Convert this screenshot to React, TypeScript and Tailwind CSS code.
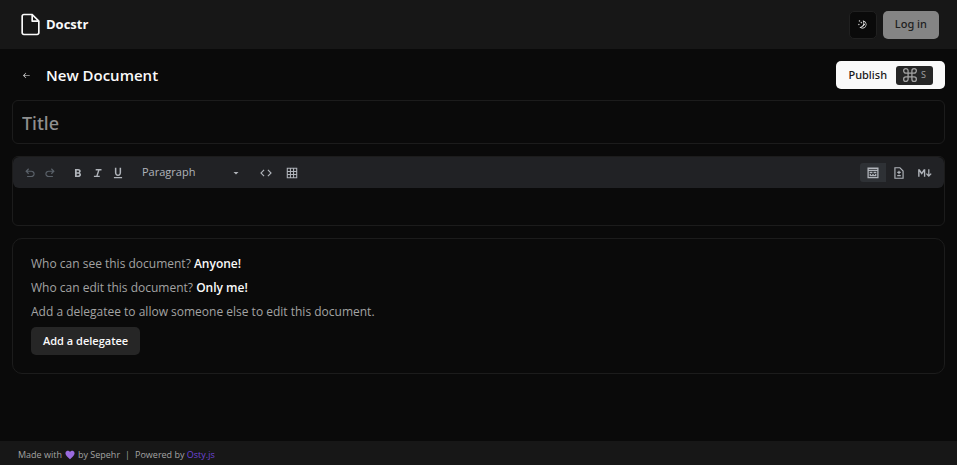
import React, { useState } from 'react';
import { RxArrowLeft, RxFile, RxMoon } from 'react-icons/rx';

const symbols = {
  undo: 'M280-200v-80h284q63 0 109.5-40T720-420q0-60-46.5-100T564-560H312l104 104-56 56-200-200 200-200 56 56-104 104h252q97 0 166.5 63T800-420q0 94-69.5 157T564-200H280Z',
  redo: 'M396-200q-97 0-166.5-63T160-420q0-94 69.5-157T396-640h252L544-744l56-56 200 200-200 200-56-56 104-104H396q-63 0-109.5 40T240-420q0 60 46.5 100T396-280h284v80H396Z',
  bold: 'M272-200v-560h221q65 0 120 40t55 111q0 51-23 78.5T602-491q25 11 55.5 41t30.5 90q0 89-65 124.5T501-200H272Zm121-112h104q48 0 58.5-24.5T566-372q0-11-10.5-35.5T494-432H393v120Zm0-228h93q33 0 48-17t15-38q0-24-17-39t-44-15h-95v109Z',
  italic: 'M200-200v-100h160l120-360H320v-100h400v100H580L460-300h140v100H200Z',
  underline: 'M200-120v-80h560v80H200Zm280-160q-101 0-157-63t-56-167v-330h103v336q0 56 28 91t82 35q54 0 82-35t28-91v-336h103v330q0 104-56 167t-157 63Z',
  arrow: 'M480-380 310-550h340L480-380Z',
  code: 'M320-240 80-480l240-240 57 57-184 184 183 183-56 56Zm320 0-57-57 184-184-183-183 56-56 240 240-240 240Z',
  table: 'M120-120v-720h720v720H120Zm74-646v142h142v-142H194Zm215 0v142h142v-142H409Zm215 0v142h142v-142H624ZM194-551v142h142v-142H194Zm215 0v142h142v-142H409Zm215 0v142h142v-142H624ZM194-336v142h142v-142H194Zm215 0v142h142v-142H409Zm215 0v142h142v-142H624Z',
  rich: 'M100-120v-740h760v740H100Zm90-90h580v-400H190v400Zm0-490h580v-60H190v60Zm60 140h190v90H250v-90Zm270 0h190v90H520v-90ZM250-260v-150h90v60h95v-60h90v60h95v-60h90v150H250Z',
  diff: 'M440-400h80v-80h80v-80h-80v-80h-80v80h-80v80h80v80Zm-80 140h240v-80H360v80ZM160-80v-800h400l240 240v560H160Zm80-80h480v-440L520-800H240v640Z',
  markdown: 'M10-220v-520h105l140 200 140-200h105v520h-95v-350L255-360 105-570v350H10ZM740-210 545-405l62-62 90 90v-363h86v363l90-90 62 62-195 195Z',
};

const Symbol = ({ name }: { name: keyof typeof symbols }) => (
  <svg viewBox="0 -960 960 960" fill="currentColor" className="size-[14px] shrink-0" aria-hidden="true">
    <path d={symbols[name]} />
  </svg>
);

const Header = () => (
  <header className="flex h-[49px] items-center justify-between bg-[#171717] px-[18px]">
    <a href="#" className="flex items-center gap-[3px]">
      <RxFile className="size-[25px]" />
      <span className="text-[13px] font-bold">Docstr</span>
    </a>
    <div className="flex items-center gap-[6px]">
      <button
        type="button"
        aria-label="Toggle theme"
        className="flex size-7 items-center justify-center rounded-[5px] border border-[#202020] bg-[#0a0a0a]"
      >
        <RxMoon className="size-[9px]" />
      </button>
      <button type="button" className="h-7 rounded-[5px] bg-[#858585] px-3 font-['Segoe_UI','Noto_Sans',sans-serif] text-[11px] font-medium text-[#202020]">
        Log in
      </button>
    </div>
  </header>
);

const Toolbar = () => (
  <div className="flex h-[31px] items-center rounded-[6px] bg-[#212225] pr-[6px] pl-[7px] text-[#b0b4ba]">
    <div className="flex text-[#5a6169]">
      <button type="button" aria-label="Undo" className="flex w-5 justify-center"><Symbol name="undo" /></button>
      <button type="button" aria-label="Redo" className="flex w-5 justify-center"><Symbol name="redo" /></button>
    </div>
    <div className="ml-2 flex">
      <button type="button" aria-label="Bold" className="flex w-5 justify-center"><Symbol name="bold" /></button>
      <button type="button" aria-label="Italic" className="flex w-5 justify-center"><Symbol name="italic" /></button>
      <button type="button" aria-label="Underline" className="flex w-5 justify-center"><Symbol name="underline" /></button>
    </div>
    <div className="ml-3 flex w-[103px] items-center">
      <select aria-label="Block type" className="min-w-0 flex-1 appearance-none bg-transparent pl-[2px] text-[11px] outline-none">
        <option>Paragraph</option>
        <option>Quote</option>
        <option>Heading 1</option>
      </select>
      <Symbol name="arrow" />
    </div>
    <div className="ml-[13px] flex gap-[6px]">
      <button type="button" aria-label="Insert code block" className="flex w-5 justify-center"><Symbol name="code" /></button>
      <button type="button" aria-label="Insert table" className="flex w-5 justify-center"><Symbol name="table" /></button>
    </div>
    <div className="ml-auto flex">
      <button type="button" aria-label="Rich text" className="flex h-[19px] w-[26px] items-center justify-center rounded-l-[3px] bg-[#2e3135]">
        <Symbol name="rich" />
      </button>
      <button type="button" aria-label="Diff mode" className="flex h-[19px] w-[26px] items-center justify-center"><Symbol name="diff" /></button>
      <button type="button" aria-label="Source mode" className="flex h-[19px] w-[26px] items-center justify-center"><Symbol name="markdown" /></button>
    </div>
  </div>
);

const App = () => {
  const [title, setTitle] = useState('');

  return (
    <div className="flex min-h-screen flex-col bg-[#0a0a0a] font-['Segoe_UI','Open_Sans',sans-serif] text-[#fafafa]">
      <Header />
      <main className="flex flex-1 flex-col gap-3 p-3">
        <div className="flex flex-col gap-[11px]">
          <div className="flex h-7 items-center justify-between">
            <div className="flex items-center gap-[6px]">
              <button type="button" aria-label="Back" className="flex size-7 items-center justify-center">
                <RxArrowLeft className="size-[9px]" />
              </button>
              <h1 className="text-[15px] font-semibold">New Document</h1>
            </div>
            <button
              type="button"
              className="flex h-7 items-center gap-[9px] rounded-[5px] bg-[#fafafa] px-3 font-['Segoe_UI','Noto_Sans',sans-serif] text-[11px] font-medium text-[#171717]"
            >
              Publish
              <kbd className="flex h-[19px] items-center gap-1 rounded-[3px] bg-[#262626] px-[7px] font-['Segoe_UI','Open_Sans',sans-serif] font-normal text-[#a3a3a3]">
                <svg viewBox="1 1 22 22" className="size-[14px]" fill="none" stroke="currentColor" strokeWidth="2" aria-hidden="true">
                  <path d="M9 9h6v6H9ZM9 9V5.500A3.500 3.500 0 1 0 5.500 9H9Zm6 0h3.500A3.500 3.500 0 1 0 15 5.500V9Zm0 6v3.500a3.500 3.500 0 1 0 3.500-3.500H15Zm-6 0H5.500A3.500 3.500 0 1 0 9 18.500V15Z" />
                </svg>
                <span className="text-[9px]">S</span>
              </kbd>
            </button>
          </div>
          <input
            aria-label="Title"
            placeholder="Title"
            value={title}
            onChange={(e) => setTitle(e.target.value)}
            className="h-11 w-full rounded-[6px] border border-[#1c1c1c] bg-transparent px-[9px] pt-[2px] font-['Segoe_UI','Noto_Sans',sans-serif] text-[18px] font-medium outline-none placeholder:text-[#8f8f8f]"
          />
        </div>
        <section className="rounded-[6px] border border-[#1c1c1c]">
          <Toolbar />
          <div contentEditable role="textbox" aria-label="Document body" className="h-[37px] outline-none" />
        </section>
        <section className="rounded-[10px] border border-[#1c1c1c] px-[18px] pt-[15px] pb-[18px] text-xs text-[#a3a3a3]">
          <p className="mb-1 leading-5">Who can see this document? <b className="font-semibold text-[#fafafa]">Anyone!</b></p>
          <p className="mb-1 leading-5">Who can edit this document? <b className="font-semibold text-[#fafafa]">Only me!</b></p>
          <p className="mb-[5px] leading-5">Add a delegatee to allow someone else to edit this document.</p>
          <button type="button" className="block h-7 rounded-[5px] bg-[#262626] px-3 text-[11px] font-semibold text-[#fafafa]">
            Add a delegatee
          </button>
        </section>
      </main>
      <footer className="flex h-6 items-center bg-[#171717] px-[18px] pt-[3px] text-[9px] text-[#a3a3a3]">
        <span className="flex items-center gap-[3px]">
          Made with
          <svg viewBox="0 0 24 24" className="size-[10px]" fill="#9a6be0" aria-label="love">
            <path d="M12 22C5 17 1 12 1 8a6 6 0 0 1 11-3.500A6 6 0 0 1 23 8c0 4-4 9-11 14Z" />
          </svg>
          by Sepehr
        </span>
        <span className="mx-[5px]">|</span>
        <span>Powered by <a href="#" className="text-[#6d45d8]">Osty.js</a></span>
      </footer>
    </div>
  );
};

export default App;
